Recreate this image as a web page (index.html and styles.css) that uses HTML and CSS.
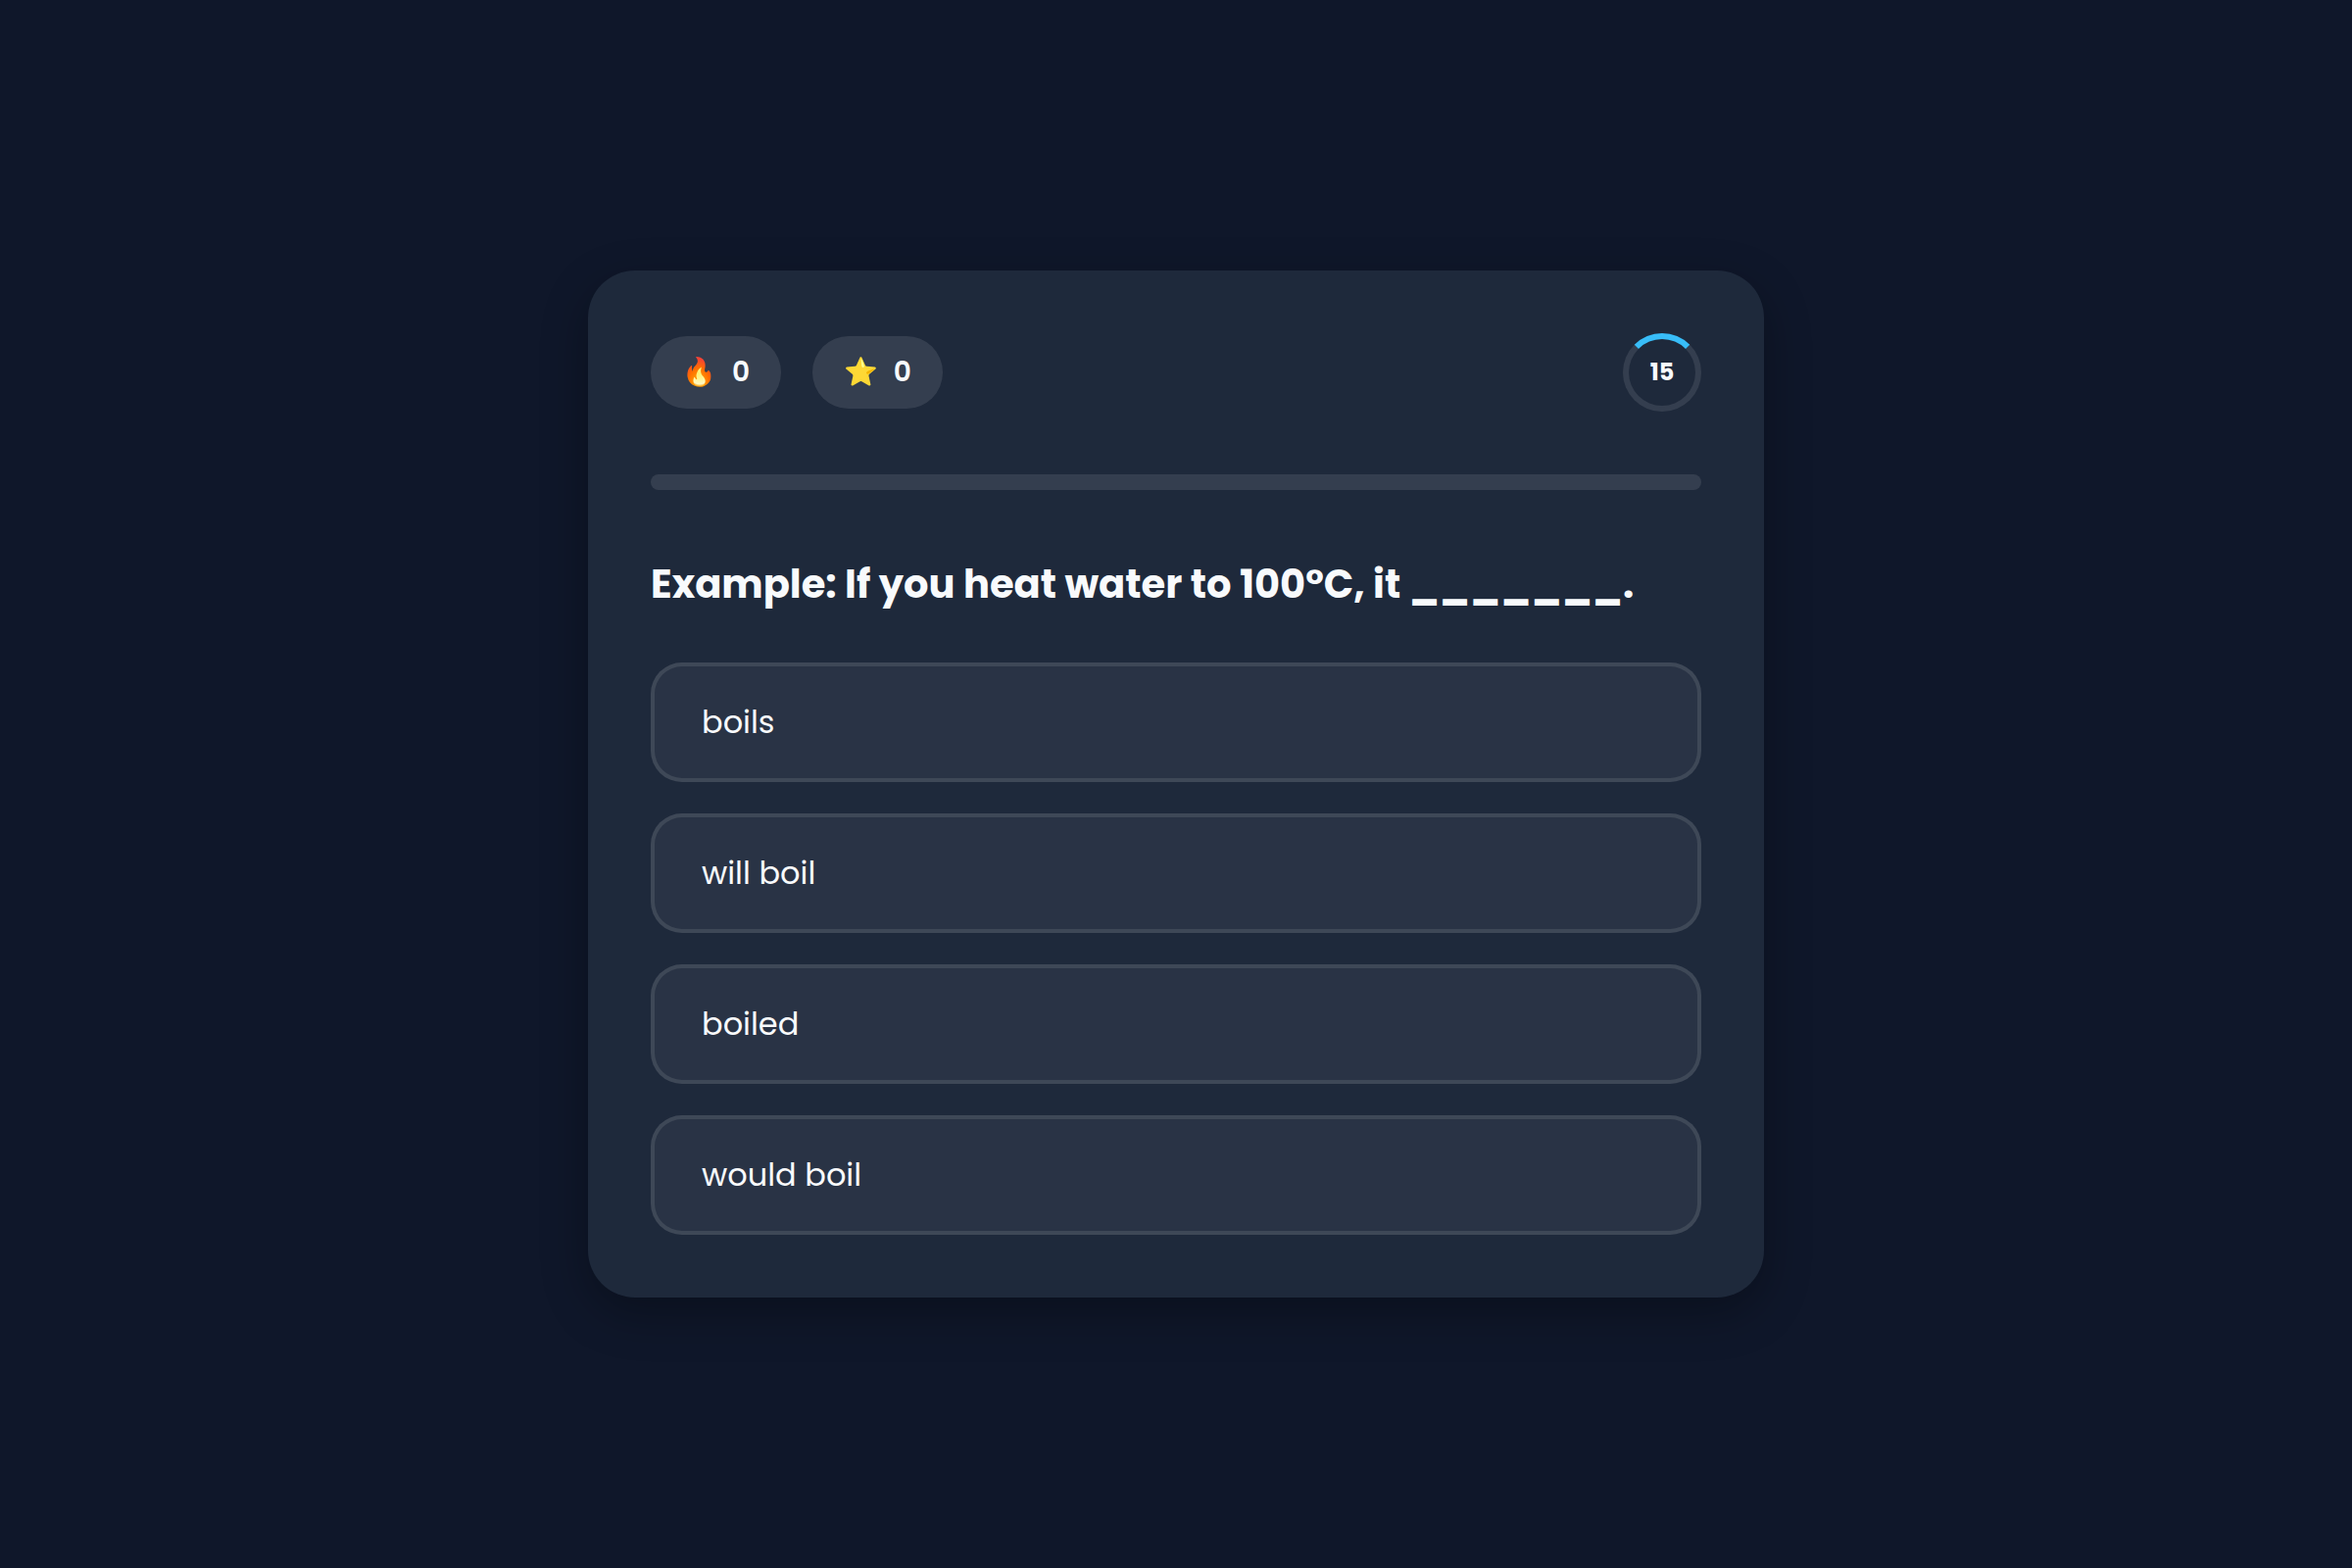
FILE: index.html
```html
<!DOCTYPE html>
<html lang="en">
<head>
<meta charset="utf-8">
<meta name="viewport" content="width=device-width, initial-scale=1">
<title>Conditionals Quiz</title>
<link rel="stylesheet" href="styles.css">
</head>
<body>
<main class="quiz">
  <header class="quiz-header">
    <div class="stats">
      <div class="stat"><span class="emoji">🔥</span><span>0</span></div>
      <div class="stat"><span class="emoji">⭐</span><span>0</span></div>
    </div>
    <div class="timer">15</div>
  </header>
  <div class="progress"></div>
  <h1 class="question">Example: If you heat water to 100°C, it _______.</h1>
  <div class="options">
    <button class="option" type="button">boils</button>
    <button class="option" type="button">will boil</button>
    <button class="option" type="button">boiled</button>
    <button class="option" type="button">would boil</button>
  </div>
</main>
</body>
</html>
```
FILE: styles.css
```css
* { box-sizing: border-box; }

body {
  margin: 0;
  min-height: 100vh;
  display: flex;
  align-items: center;
  justify-content: center;
  background: #0f172a;
  color: #f8fafc;
  font-family: Poppins, Inter, "Noto Sans", sans-serif;
}

.quiz {
  width: 100%;
  max-width: 1200px;
  padding: 64px;
  border-radius: 48px;
  background: #1e293b;
  box-shadow: 0 16px 48px rgba(0, 0, 0, 0.3);
}

.quiz-header {
  display: flex;
  align-items: center;
  justify-content: space-between;
  margin-bottom: 64px;
}

.stats { display: flex; gap: 32px; }

.stat {
  display: flex;
  align-items: center;
  gap: 16px;
  padding: 16px 32px;
  border-radius: 40px;
  background: rgba(255, 255, 255, 0.1);
  font-size: 28px;
  font-weight: 600;
  line-height: 42px;
}

.emoji { font-family: "Noto Color Emoji", sans-serif; }

.timer {
  display: flex;
  align-items: center;
  justify-content: center;
  width: 80px;
  height: 80px;
  border: 6px solid rgba(255, 255, 255, 0.1);
  border-top-color: #38bdf8;
  border-radius: 50%;
  font-size: 24px;
  font-weight: 700;
  line-height: 34px;
}

.progress {
  height: 16px;
  margin-bottom: 64px;
  border-radius: 8px;
  background: rgba(255, 255, 255, 0.1);
}

.question {
  margin: 0 0 48px;
  font-size: 40px;
  font-weight: 700;
  line-height: 64px;
}

.options { display: grid; gap: 32px; }

.option {
  padding: 32px 48px;
  border: 4px solid rgba(255, 255, 255, 0.1);
  border-radius: 32px;
  background: rgba(255, 255, 255, 0.05);
  color: inherit;
  font: inherit;
  font-size: 32px;
  line-height: 50px;
  text-align: left;
  cursor: pointer;
}
```
